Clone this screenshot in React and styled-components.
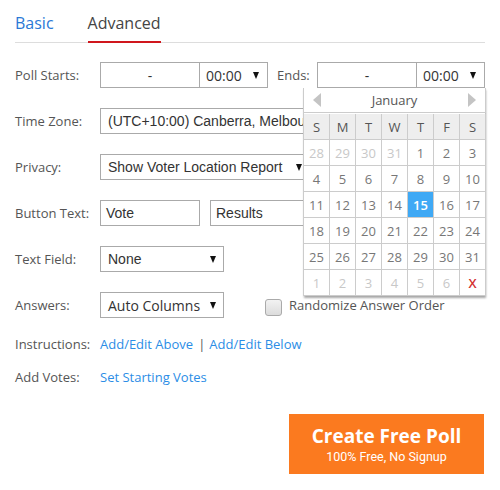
import React from "react";
import styled, { createGlobalStyle } from "styled-components";

const Global = createGlobalStyle`
  html, body { margin: 0; padding: 0; background: #fff; }
  body { font-family: "Open Sans", "DejaVu Sans", sans-serif; }
  * { box-sizing: border-box; }
`;

const Page = styled.div`
  width: 500px;
  height: 490px;
  padding: 0 15px;
  color: #555;
`;

const Tabs = styled.div`
  display: flex;
  align-items: flex-end;
  height: 43px;
  border-bottom: 1px solid #ddd;
  gap: 34px;
`;

const Tab = styled.div`
  font-size: 16px;
  line-height: 22px;
  padding-bottom: 7px;
  margin-bottom: -1px;
  border-bottom: 2px solid ${(p) => (p.$active ? "#d0171d" : "transparent")};
  color: ${(p) => (p.$active ? "#444" : "#2a78d6")};
`;

const Form = styled.div`
  padding-top: 19px;
`;

const Row = styled.div`
  display: flex;
  align-items: center;
  height: ${(p) => (p.$text ? "20px" : "26px")};
  margin-bottom: ${(p) => p.$mb ?? 20}px;
`;

const Label = styled.div`
  width: 85px;
  flex: none;
  font-size: 13px;
  color: #555;
`;

const EndsLabel = styled.div`
  font-size: 13px;
  color: #555;
  width: 40px;
  flex: none;
  margin-left: 9px;
`;

const Box = styled.div`
  height: 26px;
  width: ${(p) => p.$w}px;
  border: 1px solid #aaa;
  background: #fff;
  display: flex;
  align-items: center;
  flex: none;
  margin-left: ${(p) => p.$ml ?? 0}px;
`;

const DateBox = styled(Box)`
  justify-content: center;
  font-size: 14px;
  color: #333;
`;

const TimeBox = styled(Box)`
  border-left: none;
  justify-content: space-between;
  padding: 0 8px 0 6px;
  font-size: 14px;
  color: #333;
`;

const SelectBox = styled(Box)`
  justify-content: space-between;
  padding: 0 7px 0 7px;
  font-family: ${(p) => (p.$os ? '"Open Sans", sans-serif' : '"Liberation Sans", Arial, sans-serif')};
  font-size: 14px;
  color: #333;
  white-space: nowrap;
  overflow: hidden;
`;

const TextBox = styled(Box)`
  padding: 0 5px;
  font-family: "Liberation Sans", Arial, sans-serif;
  font-size: 14px;
  color: #333;
`;

const Arrow = styled.span`
  width: 0;
  height: 0;
  border-left: 3.5px solid transparent;
  border-right: 3.5px solid transparent;
  border-top: 7px solid #111;
  flex: none;
  margin-left: 6px;
`;

const EndsGroup = styled.div`
  position: relative;
  display: flex;
`;

const Calendar = styled.div`
  position: absolute;
  top: 26px;
  left: -14px;
  width: 182px;
  background: #fff;
  border-left: 1px solid #ccc;
  box-shadow: 1px 2px 2px rgba(0, 0, 0, 0.35);
  z-index: 5;
  display: grid;
  grid-template-columns: repeat(7, 26px);
  grid-auto-rows: 26px;
`;

const MonthBar = styled.div`
  grid-column: 1 / span 7;
  height: 25px;
  display: flex;
  align-items: center;
  justify-content: space-between;
  padding: 0 9px;
  font-size: 13px;
  color: #555;
  border-right: 1px solid #ccc;
  border-bottom: 1px solid #ccc;
`;

const Nav = styled.span`
  width: 0;
  height: 0;
  border-top: 7px solid transparent;
  border-bottom: 7px solid transparent;
  ${(p) => (p.$dir === "left" ? "border-right: 8px solid #c4c4c4;" : "border-left: 8px solid #c4c4c4;")}
`;

const Cell = styled.div`
  display: flex;
  align-items: center;
  justify-content: center;
  border-right: 1px solid #ccc;
  border-bottom: 1px solid #ccc;
  font-size: 13px;
  background: ${(p) => (p.$head ? "#eeeeee" : p.$sel ? "#3fa9f5" : "#fff")};
  color: ${(p) =>
    p.$sel ? "#fff" : p.$close ? "#d32f2f" : p.$muted ? "#c8c8c8" : p.$head ? "#555" : "#777"};
  font-weight: ${(p) => (p.$sel || p.$close ? 600 : 400)};
`;

const Checkbox = styled.span`
  width: 17px;
  height: 17px;
  border: 1px solid #aaa;
  border-radius: 3px;
  background: linear-gradient(#f2f2f2, #dcdcdc);
  margin-left: 41px;
  margin-right: 7px;
  margin-top: 4px;
  flex: none;
`;

const CheckText = styled.span`
  font-size: 13px;
  color: #555;
`;

const Link = styled.a`
  font-size: 13px;
  color: #2b8de6;
  text-decoration: none;
`;

const Sep = styled.span`
  font-size: 13px;
  color: #555;
  margin: 0 4px 0 5px;
`;

const Footer = styled.div`
  display: flex;
  justify-content: flex-end;
  padding-right: 1px;
`;

const CreateButton = styled.button`
  width: 195px;
  height: 60px;
  border: none;
  background: #fb7a1f;
  color: #fff;
  display: flex;
  flex-direction: column;
  align-items: center;
  justify-content: center;
  padding: 0;
  cursor: pointer;
`;

const BtnTitle = styled.span`
  font-family: "Open Sans", sans-serif;
  font-weight: 700;
  font-size: 19px;
  line-height: 24px;
`;

const BtnSub = styled.span`
  font-family: Roboto, sans-serif;
  font-size: 12.5px;
  line-height: 16px;
  margin-top: 1px;
`;

const weekdays = ["S", "M", "T", "W", "T", "F", "S"];
const days = [
  [28, 1], [29, 1], [30, 1], [31, 1], [1, 0], [2, 0], [3, 0],
  [4, 0], [5, 0], [6, 0], [7, 0], [8, 0], [9, 0], [10, 0],
  [11, 0], [12, 0], [13, 0], [14, 0], [15, 0, 1], [16, 0], [17, 0],
  [18, 0], [19, 0], [20, 0], [21, 0], [22, 0], [23, 0], [24, 0],
  [25, 0], [26, 0], [27, 0], [28, 0], [29, 0], [30, 0], [31, 0],
  [1, 1], [2, 1], [3, 1], [4, 1], [5, 1], [6, 1],
];

export default function App() {
  return (
    <Page>
      <Global />
      <Tabs>
        <Tab>Basic</Tab>
        <Tab $active>Advanced</Tab>
      </Tabs>
      <Form>
        <Row>
          <Label>Poll Starts:</Label>
          <DateBox $w={100}>-</DateBox>
          <TimeBox $w={68}>
            00:00 <Arrow />
          </TimeBox>
          <EndsLabel>Ends:</EndsLabel>
          <EndsGroup>
            <DateBox $w={100}>-</DateBox>
            <TimeBox $w={68}>
              00:00 <Arrow />
            </TimeBox>
            <Calendar>
              <MonthBar>
                <Nav $dir="left" />
                <span>January</span>
                <Nav $dir="right" />
              </MonthBar>
              {weekdays.map((d, i) => (
                <Cell key={"w" + i} $head>
                  {d}
                </Cell>
              ))}
              {days.map(([n, m, s], i) => (
                <Cell key={"d" + i} $muted={m === 1} $sel={s === 1}>
                  {n}
                </Cell>
              ))}
              <Cell $close>X</Cell>
            </Calendar>
          </EndsGroup>
        </Row>
        <Row>
          <Label>Time Zone:</Label>
          <SelectBox $w={210}>(UTC+10:00) Canberra, Melbourne, Sydney</SelectBox>
        </Row>
        <Row>
          <Label>Privacy:</Label>
          <SelectBox $w={210}>
            Show Voter Location Report <Arrow />
          </SelectBox>
        </Row>
        <Row>
          <Label>Button Text:</Label>
          <TextBox $w={100}>Vote</TextBox>
          <TextBox $w={100} $ml={10}>
            Results
          </TextBox>
        </Row>
        <Row>
          <Label>Text Field:</Label>
          <SelectBox $w={124}>
            None <Arrow />
          </SelectBox>
        </Row>
        <Row $mb={16}>
          <Label>Answers:</Label>
          <SelectBox $w={124} $os>
            Auto Columns <Arrow />
          </SelectBox>
          <Checkbox />
          <CheckText>Randomize Answer Order</CheckText>
        </Row>
        <Row $text $mb={13}>
          <Label>Instructions:</Label>
          <Link href="#">Add/Edit Above</Link>
          <Sep>|</Sep>
          <Link href="#">Add/Edit Below</Link>
        </Row>
        <Row $text $mb={27}>
          <Label>Add Votes:</Label>
          <Link href="#">Set Starting Votes</Link>
        </Row>
        <Footer>
          <CreateButton>
            <BtnTitle>Create Free Poll</BtnTitle>
            <BtnSub>100% Free, No Signup</BtnSub>
          </CreateButton>
        </Footer>
      </Form>
    </Page>
  );
}
